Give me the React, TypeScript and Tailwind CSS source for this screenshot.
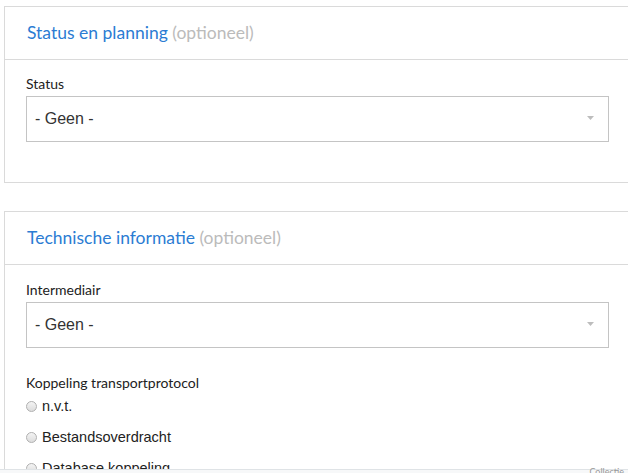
import React from 'react';

const sans = { fontFamily: 'Lato, "Noto Sans", sans-serif' };

const SelectBox: React.FC = () => (
  <div className="mt-[3px] flex h-[46px] w-[583px] items-center justify-between border border-[#c4c4c4] bg-white pl-[8px] pr-[14px]">
    <span className="text-[16px] text-[#333]" style={{ fontFamily: '"Liberation Sans", Arial, sans-serif' }}>
      - Geen -
    </span>
    <svg width="7" height="4" viewBox="0 0 7 4" className="mb-[2px]">
      <path d="M0 0 H7 L3.5 4 Z" fill="#bdbdbd" />
    </svg>
  </div>
);

const Radio: React.FC<{ label: string }> = ({ label }) => (
  <label className="flex h-[31px] items-center gap-[5px]" style={{ fontFamily: '"Liberation Sans", Arial, sans-serif' }}>
    <span className="inline-block h-[11px] w-[11px] rounded-full border border-[#b0b0b0] bg-gradient-to-b from-[#f4f4f4] to-[#dcdcdc]" />
    <span className="text-[14.5px] text-[#222]">{label}</span>
  </label>
);

const PanelHeader: React.FC<{ title: string }> = ({ title }) => (
  <div className="flex h-[53px] items-center border-b border-[#dadada] pl-[22px]">
    <h2 className="text-[17.5px] text-[#2b7cd3]" style={sans}>
      {title} <span className="text-[#bbbbbb]">(optioneel)</span>
    </h2>
  </div>
);

export default function App() {
  return (
    <div className="relative h-[473px] w-[628px] overflow-hidden bg-white" style={sans}>
      <div className="ml-[4px] mt-[6px] w-[640px] border border-[#dadada]">
        <PanelHeader title="Status en planning" />
        <div className="h-[122px] pl-[21px] pt-[15px]">
          <div className="text-[14px] leading-[18px] text-[#222]">Status</div>
          <SelectBox />
        </div>
      </div>

      <div className="ml-[4px] mt-[28px] w-[640px] border border-[#dadada]">
        <PanelHeader title="Technische informatie" />
        <div className="pl-[21px] pt-[16px]">
          <div className="text-[14px] leading-[18px] text-[#222]">Intermediair</div>
          <SelectBox />
          <div className="mt-[26px] text-[14px] leading-[18px] text-[#222]">Koppeling transportprotocol</div>
          <div className="-mt-[1px]">
            <Radio label="n.v.t." />
            <Radio label="Bestandsoverdracht" />
            <Radio label="Database koppeling" />
          </div>
        </div>
      </div>

      <div className="absolute bottom-0 left-0 flex h-[4px] w-full items-start justify-end border-t border-[#dfe3e6] bg-[#f7f8f9] pr-[4px]">
        <span className="-mt-[3px] text-[9px] leading-none text-[#999]">Collectie</span>
      </div>
    </div>
  );
}
